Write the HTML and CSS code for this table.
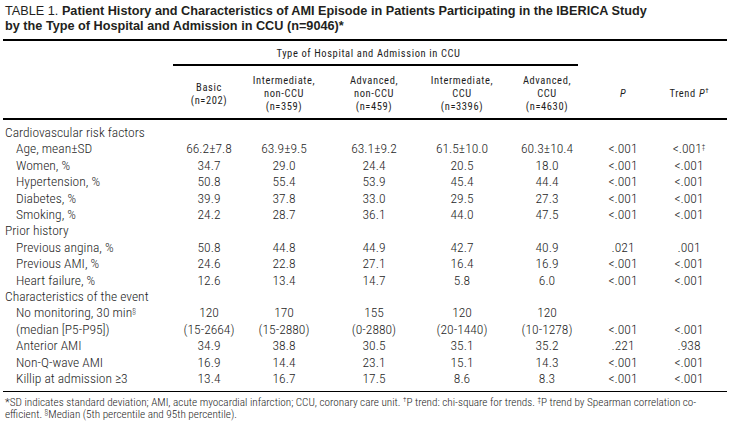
FILE: index.html
```html
<!DOCTYPE html>
<html lang="en">
<head>
<meta charset="utf-8">
<title>Table 1</title>
<link rel="stylesheet" href="styles.css">
</head>
<body>
<div class="page">
  <h1 class="title"><span class="tlabel">TABLE 1.</span> Patient History and Characteristics of AMI Episode in Patients Participating in the IBERICA Study<br>by the Type of Hospital and Admission in CCU (n=9046)*</h1>
  <table class="data">
    <colgroup>
      <col class="c-label"><col class="c-1"><col class="c-2"><col class="c-3"><col class="c-4"><col class="c-5"><col class="c-p"><col class="c-t">
    </colgroup>
    <thead>
      <tr class="group">
        <th></th>
        <th colspan="5"><div class="group-label">Type of Hospital and Admission in CCU</div></th>
        <th></th>
        <th></th>
      </tr>
      <tr class="cols">
        <th></th>
        <th>Basic<br>(n=202)</th>
        <th>Intermediate,<br>non-CCU<br>(n=359)</th>
        <th>Advanced,<br>non-CCU<br>(n=459)</th>
        <th>Intermediate,<br>CCU<br>(n=3396)</th>
        <th>Advanced,<br>CCU<br>(n=4630)</th>
        <th><i>P</i></th>
        <th>Trend <i>P</i><sup>†</sup></th>
      </tr>
    </thead>
    <tbody>
      <tr class="section first"><td colspan="8">Cardiovascular risk factors</td></tr>
      <tr><td class="label">Age, mean±SD</td><td>66.2±7.8</td><td>63.9±9.5</td><td>63.1±9.2</td><td>61.5±10.0</td><td>60.3±10.4</td><td>&lt;.001</td><td>&lt;.001<sup>‡</sup></td></tr>
      <tr><td class="label">Women, %</td><td>34.7</td><td>29.0</td><td>24.4</td><td>20.5</td><td>18.0</td><td>&lt;.001</td><td>&lt;.001</td></tr>
      <tr><td class="label">Hypertension, %</td><td>50.8</td><td>55.4</td><td>53.9</td><td>45.4</td><td>44.4</td><td>&lt;.001</td><td>&lt;.001</td></tr>
      <tr><td class="label">Diabetes, %</td><td>39.9</td><td>37.8</td><td>33.0</td><td>29.5</td><td>27.3</td><td>&lt;.001</td><td>&lt;.001</td></tr>
      <tr><td class="label">Smoking, %</td><td>24.2</td><td>28.7</td><td>36.1</td><td>44.0</td><td>47.5</td><td>&lt;.001</td><td>&lt;.001</td></tr>
      <tr class="section"><td colspan="8">Prior history</td></tr>
      <tr><td class="label">Previous angina, %</td><td>50.8</td><td>44.8</td><td>44.9</td><td>42.7</td><td>40.9</td><td>.021</td><td>.001</td></tr>
      <tr><td class="label">Previous AMI, %</td><td>24.6</td><td>22.8</td><td>27.1</td><td>16.4</td><td>16.9</td><td>&lt;.001</td><td>&lt;.001</td></tr>
      <tr><td class="label">Heart failure, %</td><td>12.6</td><td>13.4</td><td>14.7</td><td>5.8</td><td>6.0</td><td>&lt;.001</td><td>&lt;.001</td></tr>
      <tr class="section"><td colspan="8">Characteristics of the event</td></tr>
      <tr><td class="label">No monitoring, 30 min<sup>§</sup></td><td>120</td><td>170</td><td>155</td><td>120</td><td>120</td><td></td><td></td></tr>
      <tr><td class="label">(median [P5-P95])</td><td>(15-2664)</td><td>(15-2880)</td><td>(0-2880)</td><td>(20-1440)</td><td>(10-1278)</td><td>&lt;.001</td><td>&lt;.001</td></tr>
      <tr><td class="label">Anterior AMI</td><td>34.9</td><td>38.8</td><td>30.5</td><td>35.1</td><td>35.2</td><td>.221</td><td>.938</td></tr>
      <tr><td class="label">Non-Q-wave AMI</td><td>16.9</td><td>14.4</td><td>23.1</td><td>15.1</td><td>14.3</td><td>&lt;.001</td><td>&lt;.001</td></tr>
      <tr class="last"><td class="label">Killip at admission ≥3</td><td>13.4</td><td>16.7</td><td>17.5</td><td>8.6</td><td>8.3</td><td>&lt;.001</td><td>&lt;.001</td></tr>
    </tbody>
  </table>
  <p class="notes">*SD indicates standard deviation; AMI, acute myocardial infarction; CCU, coronary care unit. <sup>†</sup>P trend: chi-square for trends. <sup>‡</sup>P trend by Spearman correlation co-<br>efficient. <sup>§</sup>Median (5th percentile and 95th percentile).</p>
</div>
</body>
</html>
```
FILE: styles.css
```css
html, body {
  margin: 0;
  padding: 0;
  background: #ffffff;
}

body {
  color: #1e1e1e;
  font-family: Roboto, "Liberation Sans", sans-serif;
}

.page {
  width: 724px;
  padding: 4px 4px 0 3px;
}

.title {
  margin: 0 0 5px 2px;
  font-family: "Liberation Sans", Arial, sans-serif;
  font-size: 12.7px;
  line-height: 15px;
  font-weight: bold;
  color: #231f20;
}

.title .tlabel {
  font-weight: normal;
}

.data {
  width: 724px;
  border-collapse: collapse;
  table-layout: fixed;
  border-top: 2px solid #000;
}

.c-label { width: 170px; }
.c-1 { width: 72px; }
.c-2 { width: 78px; }
.c-3 { width: 102px; }
.c-4 { width: 74px; }
.c-5 { width: 96px; }
.c-p { width: 56px; }
.c-t { width: 76px; }

.data th {
  font-weight: 400;
  font-size: 10.5px;
  font-stretch: 75%;
  line-height: 13px;
  letter-spacing: 0.6px;
  text-align: center;
  vertical-align: middle;
  padding: 0;
}

.group th {
  padding-top: 6px;
}

.group-label {
  margin-right: 17px;
  padding: 0 14px 4px 0;
  border-bottom: 2px solid #000;
}

.cols th {
  padding: 8px 0 5px;
  border-bottom: 2px solid #000;
}

.data th i {
  font-style: italic;
}

.data sup {
  font-size: 7px;
  line-height: 0;
  vertical-align: 4px;
  letter-spacing: 0;
}

.data td {
  font-size: 13.5px;
  font-weight: 300;
  font-stretch: 85%;
  line-height: 16.4px;
  text-align: center;
  padding: 0;
  white-space: nowrap;
}

.data td.label {
  text-align: left;
  padding-left: 13px;
}

.section td {
  text-align: left;
  padding-left: 2px;
}

.first td {
  padding-top: 4px;
}

.last td {
  padding-bottom: 4px;
  border-bottom: 1.5px solid #000;
}

.notes {
  margin: 5px 0 0 2px;
  font-size: 11.2px;
  font-weight: 300;
  font-stretch: 85%;
  line-height: 12px;
}

.notes sup {
  font-size: 7px;
  line-height: 0;
  vertical-align: 4px;
}
```
